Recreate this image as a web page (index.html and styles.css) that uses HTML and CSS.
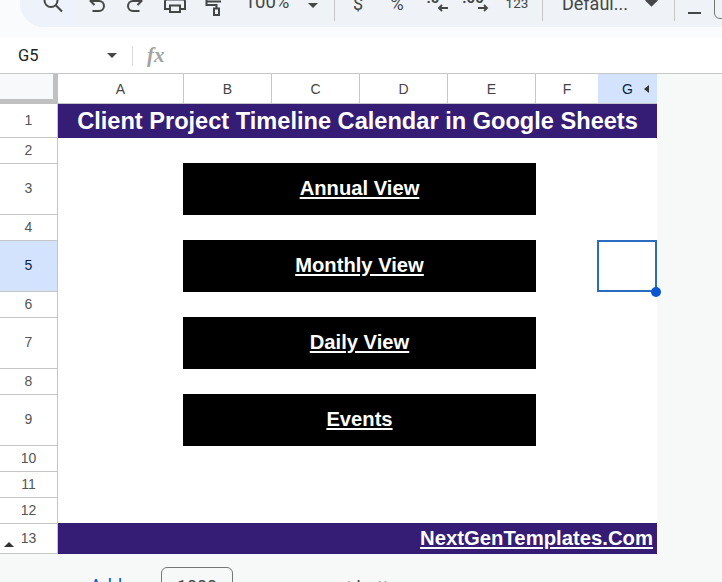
FILE: index.html
```html
<!DOCTYPE html>
<html lang="en">
  <head>
    <meta charset="UTF-8" />
    <meta name="viewport" content="width=device-width, initial-scale=1.0" />
    <title>Client Project Timeline Calendar - Google Sheets</title>
    <link rel="stylesheet" href="styles.css">
  </head>
  <body>
    <!-- Toolbar (top is cut off by the window) -->
    <div class="top-strip">
      <div class="toolbar">
        <div class="tool search">
          <svg width="24" height="24" viewBox="0 0 24 24"><circle cx="8" cy="7.500" r="6.500" /><path d="M12.800 12.300 19 18.500" /></svg>
        </div>
        <div class="tool w37">
          <svg width="24" height="24" viewBox="0 0 24 24"><path d="M9.500 4 5.500 8l4 4M5.500 8h8.500a5 5 0 0 1 0 10H7.500" /></svg>
        </div>
        <div class="tool w40">
          <svg width="24" height="24" viewBox="0 0 24 24"><path d="M14.500 4l4 4-4 4M18.500 8H10a5 5 0 0 0 0 10h6.500" /></svg>
        </div>
        <div class="tool w40">
          <svg width="24" height="24" viewBox="0 0 24 24"><path d="M7 6V2h10v4M7 16H2V8.500a2 2 0 0 1 2-2h16a2 2 0 0 1 2 2V16h-5M7 12.500h10V19H7z" /></svg>
        </div>
        <div class="tool w37">
          <svg width="24" height="24" viewBox="0 0 24 24"><path d="M4 8.500h15M4.500 7v5h10v3.500M12 15.500h5V22h-5z" /></svg>
        </div>
        <div class="tool zoom">100%</div>
        <div class="tool w22"><span class="caret"></span></div>
        <div class="tool w21"><span class="sep"></span></div>
        <div class="tool w26 symbol">$</div>
        <div class="tool w52 symbol">%</div>
        <div class="tool w26 decimal">
          <span>.0</span>
          <svg width="12" height="8" viewBox="0 0 12 8"><path d="M11 4H2M5 1 2 4l3 3" /></svg>
        </div>
        <div class="tool w54 decimal">
          <span>.00</span>
          <svg width="12" height="8" viewBox="0 0 12 8"><path d="M1 4h9M7 1l3 3-3 3" /></svg>
        </div>
        <div class="tool w28 small">123</div>
        <div class="tool w22"><span class="sep"></span></div>
        <div class="tool font-name">Defaul...</div>
        <div class="tool w24"><span class="diamond"></span></div>
        <div class="tool w22"><span class="sep"></span></div>
        <div class="tool w18"><span class="minus"></span></div>
        <div class="size-box"></div>
      </div>
    </div>

    <!-- Formula bar -->
    <div class="formula-bar">
      <div class="name-box">G5</div>
      <span class="caret"></span>
      <span class="fx-sep"></span>
      <span class="fx">fx</span>
    </div>

    <!-- Sheet -->
    <div class="col-headers">
      <div class="corner"></div>
      <div class="col col-a">A</div>
      <div class="col col-b">B</div>
      <div class="col col-b">C</div>
      <div class="col col-b">D</div>
      <div class="col col-b">E</div>
      <div class="col col-f">F</div>
      <div class="col col-g selected">G<span class="col-arrow"></span></div>
    </div>

    <div class="row h34">
      <div class="rowhead">1</div>
      <div class="cells"><div class="title-band">Client Project Timeline Calendar in Google Sheets</div></div>
    </div>
    <div class="row h26">
      <div class="rowhead">2</div>
      <div class="cells"></div>
    </div>
    <div class="row h51">
      <div class="rowhead">3</div>
      <div class="cells"><a class="nav-btn" href="#">Annual View</a></div>
    </div>
    <div class="row h26">
      <div class="rowhead">4</div>
      <div class="cells"></div>
    </div>
    <div class="row h51">
      <div class="rowhead selected">5</div>
      <div class="cells">
        <a class="nav-btn" href="#">Monthly View</a>
        <div class="cell-cursor"><span class="cursor-handle"></span></div>
      </div>
    </div>
    <div class="row h26">
      <div class="rowhead">6</div>
      <div class="cells"></div>
    </div>
    <div class="row h51">
      <div class="rowhead">7</div>
      <div class="cells"><a class="nav-btn" href="#">Daily View</a></div>
    </div>
    <div class="row h26">
      <div class="rowhead">8</div>
      <div class="cells"></div>
    </div>
    <div class="row h51">
      <div class="rowhead">9</div>
      <div class="cells"><a class="nav-btn" href="#">Events</a></div>
    </div>
    <div class="row h26">
      <div class="rowhead">10</div>
      <div class="cells"></div>
    </div>
    <div class="row h26">
      <div class="rowhead">11</div>
      <div class="cells"></div>
    </div>
    <div class="row h26">
      <div class="rowhead">12</div>
      <div class="cells"></div>
    </div>
    <div class="row h30">
      <div class="rowhead"><span class="up-arrow"></span>13</div>
      <div class="cells"><div class="footer-band"><a href="#">NextGenTemplates.Com</a></div></div>
    </div>

    <!-- Add rows -->
    <div class="add-rows">
      <span class="add-link">Add</span>
      <div class="add-input">1000</div>
      <span class="add-text">more rows at bottom</span>
    </div>
  </body>
</html>
```

FILE: styles.css
```css
/* Reset & Global Styling */
* {
  box-sizing: border-box;
  margin: 0;
  padding: 0;
}

html,
body {
  height: 582px;
  overflow: hidden;
}

body {
  background-color: #f7f9f8;
  color: #444746;
  font-family: "Roboto", "Liberation Sans", sans-serif;
}

a {
  color: inherit;
}

/* Toolbar */
.top-strip {
  height: 38px;
  background: #f9fbfd;
  overflow: hidden;
}

.toolbar {
  display: flex;
  align-items: center;
  height: 45px;
  margin-top: -18px;
  margin-left: 20px;
  background: #eff2f6;
  border-radius: 0 0 0 24px;
  font-size: 18px;
  overflow: hidden;
}

.tool {
  display: flex;
  flex: none;
  align-items: center;
  justify-content: center;
  height: 45px;
}

.tool svg {
  fill: none;
  stroke: #444746;
  stroke-width: 2;
}

.search {
  width: 58px;
  padding-left: 12px;
  background: #edf2fb;
}

.w18 { width: 18px; }
.w21 { width: 21px; }
.w22 { width: 22px; }
.w24 { width: 24px; }
.w26 { width: 26px; }
.w28 { width: 28px; }
.w37 { width: 37px; }
.w40 { width: 40px; }
.w52 { width: 52px; }
.w54 { width: 54px; }

.zoom {
  width: 70px;
  padding-bottom: 5px;
  font-size: 18.5px;
}

.symbol {
  padding-bottom: 2px;
  font-size: 18px;
}

.small {
  padding-bottom: 3px;
  font-size: 13.5px;
}

.font-name {
  justify-content: flex-start;
  width: 86px;
  padding-left: 9px;
  padding-bottom: 3px;
  font-size: 18px;
}

.decimal {
  flex-direction: column;
  padding-bottom: 7px;
  font-size: 15px;
  font-weight: 700;
  line-height: 14px;
}

.decimal span {
  margin-right: 6px;
}

.decimal svg {
  margin-left: 14px;
  margin-top: -1px;
  stroke-width: 1.8;
}

.sep {
  display: block;
  width: 1px;
  height: 30px;
  margin-top: 2px;
  background: #c7c7c7;
}

.caret {
  display: block;
  width: 0;
  height: 0;
  border-left: 5px solid transparent;
  border-right: 5px solid transparent;
  border-top: 5px solid #444746;
}

.toolbar .caret {
  margin-bottom: -2px;
}

.diamond {
  display: block;
  width: 9px;
  height: 9px;
  background: #444746;
  transform: rotate(45deg);
  margin-bottom: 8px;
}

.minus {
  display: block;
  width: 13px;
  height: 2px;
  margin-top: 16px;
  background: #444746;
}

.size-box {
  flex: none;
  width: 30px;
  height: 36px;
  margin-left: 11px;
  margin-bottom: 7px;
  border: 1px solid #747775;
  border-radius: 6px;
}

/* Formula Bar */
.formula-bar {
  display: flex;
  align-items: center;
  height: 36px;
  padding-left: 18px;
  background: #fff;
  border-bottom: 1px solid #c4c7c5;
}

.name-box {
  width: 89px;
  color: #222;
  font-size: 16.5px;
}

.fx-sep {
  width: 1px;
  height: 20px;
  margin-left: 15px;
  background: #dadce0;
}

.fx {
  margin-left: 14px;
  color: #a3a3a3;
  font-family: "Liberation Serif", serif;
  font-size: 21px;
  font-style: italic;
  font-weight: 700;
}

/* Column Headers */
.col-headers {
  display: flex;
  height: 30px;
}

.corner {
  flex: none;
  width: 58px;
  background: #f8f9fa;
  border-right: 5px solid #c0c0c0;
  border-bottom: 5px solid #c0c0c0;
}

.col {
  display: flex;
  flex: none;
  align-items: center;
  justify-content: center;
  background: #fff;
  color: #444;
  font-family: "Liberation Sans", sans-serif;
  font-size: 14px;
  border-right: 1px solid #c4c7c5;
  border-bottom: 1px solid #c4c7c5;
}

.col-a { width: 126px; }
.col-b { width: 88px; }

.col-f {
  width: 62px;
  border-right: 0;
}

.col-g {
  position: relative;
  width: 59px;
  border-right: 0;
}

.col.selected {
  background: #d3e3fd;
  color: #0b1f44;
}

.col-arrow {
  position: absolute;
  top: 11px;
  left: 46px;
  border-top: 4px solid transparent;
  border-bottom: 4px solid transparent;
  border-right: 5px solid #333;
}

/* Rows */
.row {
  display: flex;
}

.h26 { height: 26px; }
.h30 { height: 30px; }
.h34 { height: 34px; }
.h51 { height: 51px; }

.rowhead {
  position: relative;
  display: flex;
  flex: none;
  align-items: center;
  justify-content: center;
  width: 58px;
  padding-bottom: 2px;
  background: #fff;
  border-right: 1px solid #c4c7c5;
  border-bottom: 1px solid #c4c7c5;
  color: #555;
  font-family: "Liberation Sans", sans-serif;
  font-size: 14px;
}

.rowhead.selected {
  background: #d3e3fd;
  color: #0b1f44;
}

.up-arrow {
  position: absolute;
  left: 4px;
  bottom: 6px;
  border-left: 5px solid transparent;
  border-right: 5px solid transparent;
  border-bottom: 5px solid #333;
}

.cells {
  position: relative;
  flex: none;
  width: 599px;
  background: #fff;
}

/* Purple bands */
.title-band,
.footer-band {
  display: flex;
  align-items: center;
  background: #351c75;
  color: #fff;
  font-family: "Liberation Sans", sans-serif;
  font-weight: 700;
}

.title-band {
  justify-content: center;
  height: 100%;
  font-size: 23.6px;
}

.footer-band {
  justify-content: flex-end;
  height: 31px;
  margin-top: -1px;
  padding-right: 4px;
  font-size: 20.3px;
}

/* Navigation Buttons */
.nav-btn {
  position: relative;
  display: flex;
  align-items: center;
  justify-content: center;
  width: 353px;
  height: 52px;
  margin-top: -1px;
  margin-left: 125px;
  padding-bottom: 2px;
  background: #000;
  color: #fff;
  font-family: "Liberation Sans", sans-serif;
  font-size: 20.2px;
  font-weight: 700;
}

/* Selected cell */
.cell-cursor {
  position: absolute;
  top: -1px;
  left: 539px;
  z-index: 1;
  width: 60px;
  height: 52px;
  border: 2px solid #2b6cc0;
}

.cursor-handle {
  position: absolute;
  right: -6px;
  bottom: -7px;
  width: 10px;
  height: 10px;
  background: #0b57d0;
  border-radius: 50%;
}

/* Add rows */
.add-rows {
  display: flex;
  align-items: flex-start;
  padding-top: 13px;
  padding-left: 90px;
  font-size: 18px;
}

.add-link {
  width: 71px;
  padding-top: 8px;
  color: #0b57d0;
}

.add-input {
  width: 72px;
  height: 36px;
  padding-top: 8px;
  border: 1px solid #747775;
  border-radius: 6px;
  text-align: center;
}

.add-text {
  margin-left: 14px;
  padding-top: 10px;
}
```
